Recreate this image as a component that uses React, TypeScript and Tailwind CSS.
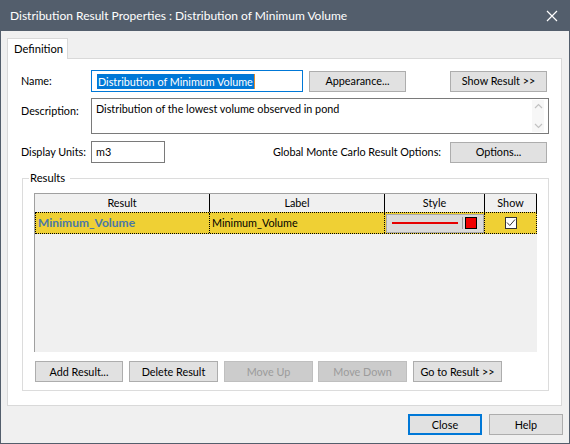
import React from "react";

const Btn = ({ children, className = "", disabled = false }: { children: React.ReactNode; className?: string; disabled?: boolean }) => (
  <div
    className={
      "h-[21px] flex items-center justify-center border whitespace-nowrap " +
      (disabled ? "bg-[#cccccc] border-[#bfbfbf] text-[#9b9b9b] " : "bg-[#e1e1e1] border-[#adadad] text-black ") +
      className
    }
  >
    {children}
  </div>
);

export default function App() {
  return (
    <div className="w-[570px] h-[444px] bg-[#f0f0f0] border border-[#535e6c] flex flex-col font-['Lato',sans-serif] text-[10.8px] leading-[14px] text-black overflow-hidden">
      {/* Title bar */}
      <div className="h-[30px] bg-[#535e6c] flex items-center justify-between pl-[9px] pr-[10px] text-white text-[12px]">
        <span>Distribution Result Properties : Distribution of Minimum Volume</span>
        <svg width="12" height="12" viewBox="0 0 12 12" className="mr-[1px]">
          <path d="M1 1 L11 11 M11 1 L1 11" stroke="#ffffff" strokeWidth="1.2" />
        </svg>
      </div>

      {/* Body */}
      <div className="flex flex-col pl-[6px] pt-[7px]">
        <div className="flex">
          <div className="relative z-10 w-[61px] h-[21px] bg-white border-l border-t border-r border-[#d9d9d9] -mb-[1px] pl-[6px] flex items-center text-[11.2px]">
            Definition
          </div>
        </div>
        <div className="w-[555px] h-[348px] bg-white border border-[#d9d9d9] flex flex-col pl-[13px]">
          {/* Name row */}
          <div className="mt-[11px] flex items-center h-[22px]">
            <div className="w-[70px] whitespace-nowrap">Name:</div>
            <div className="w-[212px] h-[22px] border border-[#0078d7] flex items-center pl-[5px]">
              <span className="bg-[#0078d7] text-white leading-[15px] px-[1px]">Distribution of Minimum Volume</span>
              <span className="w-[1px] h-[15px] bg-[#e08a2c]" />
            </div>
            <Btn className="ml-[6px] w-[97px]">Appearance...</Btn>
            <Btn className="ml-[44px] w-[97px]">Show Result &gt;&gt;</Btn>
          </div>
          {/* Description */}
          <div className="mt-[6px] flex items-start">
            <div className="w-[70px] pt-[6px] whitespace-nowrap">Description:</div>
            <div className="w-[458px] h-[36px] border border-[#7a7a7a] flex">
              <div className="flex-1 pl-[4px] pt-[3px]">Distribution of the lowest volume observed in pond</div>
              <div className="w-[12px] mr-[4px] my-[1px] bg-[#f7f7f7] flex flex-col items-center justify-between py-[3px]">
                <svg width="9" height="6" viewBox="0 0 9 6"><path d="M1 5 L4.5 1.5 L8 5" stroke="#c2c2c2" fill="none" strokeWidth="1.2" /></svg>
                <svg width="9" height="6" viewBox="0 0 9 6"><path d="M1 1 L4.5 4.5 L8 1" stroke="#c2c2c2" fill="none" strokeWidth="1.2" /></svg>
              </div>
            </div>
          </div>
          {/* Display units */}
          <div className="mt-[7px] flex items-center h-[22px] w-[526px]">
            <div className="w-[70px] whitespace-nowrap">Display Units:</div>
            <div className="w-[74px] h-[22px] border border-[#7a7a7a] flex items-center pl-[4px]">m3</div>
            <div className="flex-1 text-right whitespace-nowrap">Global Monte Carlo Result Options:</div>
            <Btn className="ml-[9px] w-[97px]">Options...</Btn>
          </div>
          {/* Results group */}
          <fieldset className="mt-[7px] ml-[1px] w-[527px] border border-[#dcdcdc] pl-[11px] pb-[8px]">
            <legend className="-ml-[5px] pr-[5px] pl-[1px] h-[16px] leading-[16px] text-[11.2px]">Results</legend>
            <div className="mt-[7px] w-[503px] h-[159px] bg-[#f0f0f0] border-l border-t border-[#a0a0a0] flex flex-col">
              <div className="h-[18px] flex">
                <div className="w-[175px] border-r border-black text-center leading-[18px]">Result</div>
                <div className="w-[175px] border-r border-black text-center leading-[18px]">Label</div>
                <div className="w-[100px] border-r border-black text-center leading-[18px]">Style</div>
                <div className="w-[52px] border-r border-black text-center leading-[18px]">Show</div>
              </div>
              <div className="h-[22px] w-[502px] bg-[#efd034] border border-dotted border-black flex">
                <div className="w-[174px] border-r border-dotted border-black pl-[2px] flex items-center font-bold text-[12px] text-[#4b78a6]">Minimum_Volume</div>
                <div className="w-[175px] border-r border-dotted border-black pl-[2px] flex items-center">Minimum_Volume</div>
                <div className="w-[100px] border-r border-dotted border-black flex items-center justify-center">
                  <div className="w-[98px] h-[19px] bg-[#dadada] border border-[#a9a9a9] flex items-center pl-[5px]">
                    <div className="w-[66px] h-[2px] bg-[#e60000]" />
                    <div className="ml-[4px] w-[1px] h-[12px] bg-[#9a9a9a]" />
                    <div className="ml-[2px] w-[12px] h-[12px] bg-[#f00000] border border-black" />
                  </div>
                </div>
                <div className="flex-1 flex items-center justify-center">
                  <div className="w-[12px] h-[12px] bg-white border border-[#333333] flex items-center justify-center">
                    <svg width="10" height="10" viewBox="0 0 10 10"><path d="M1 4.5 L3.8 7.5 L9 1.5" stroke="#333333" fill="none" strokeWidth="1" /></svg>
                  </div>
                </div>
              </div>
            </div>
            <div className="mt-[9px] flex ml-[1px]">
              <Btn className="w-[88px]">Add Result...</Btn>
              <Btn className="ml-[6px] w-[89px]">Delete Result</Btn>
              <Btn disabled className="ml-[6px] w-[89px]">Move Up</Btn>
              <Btn disabled className="ml-[5px] w-[89px]">Move Down</Btn>
              <Btn className="ml-[6px] w-[89px]">Go to Result &gt;&gt;</Btn>
            </div>
          </fieldset>
        </div>
        {/* Footer */}
        <div className="mt-[8px] flex pl-[401px]">
          <div className="w-[74px] h-[21px] border-2 border-[#0078d7] bg-[#e1e1e1] flex items-center justify-center">Close</div>
          <Btn className="ml-[7px] w-[74px]">Help</Btn>
        </div>
      </div>
    </div>
  );
}
